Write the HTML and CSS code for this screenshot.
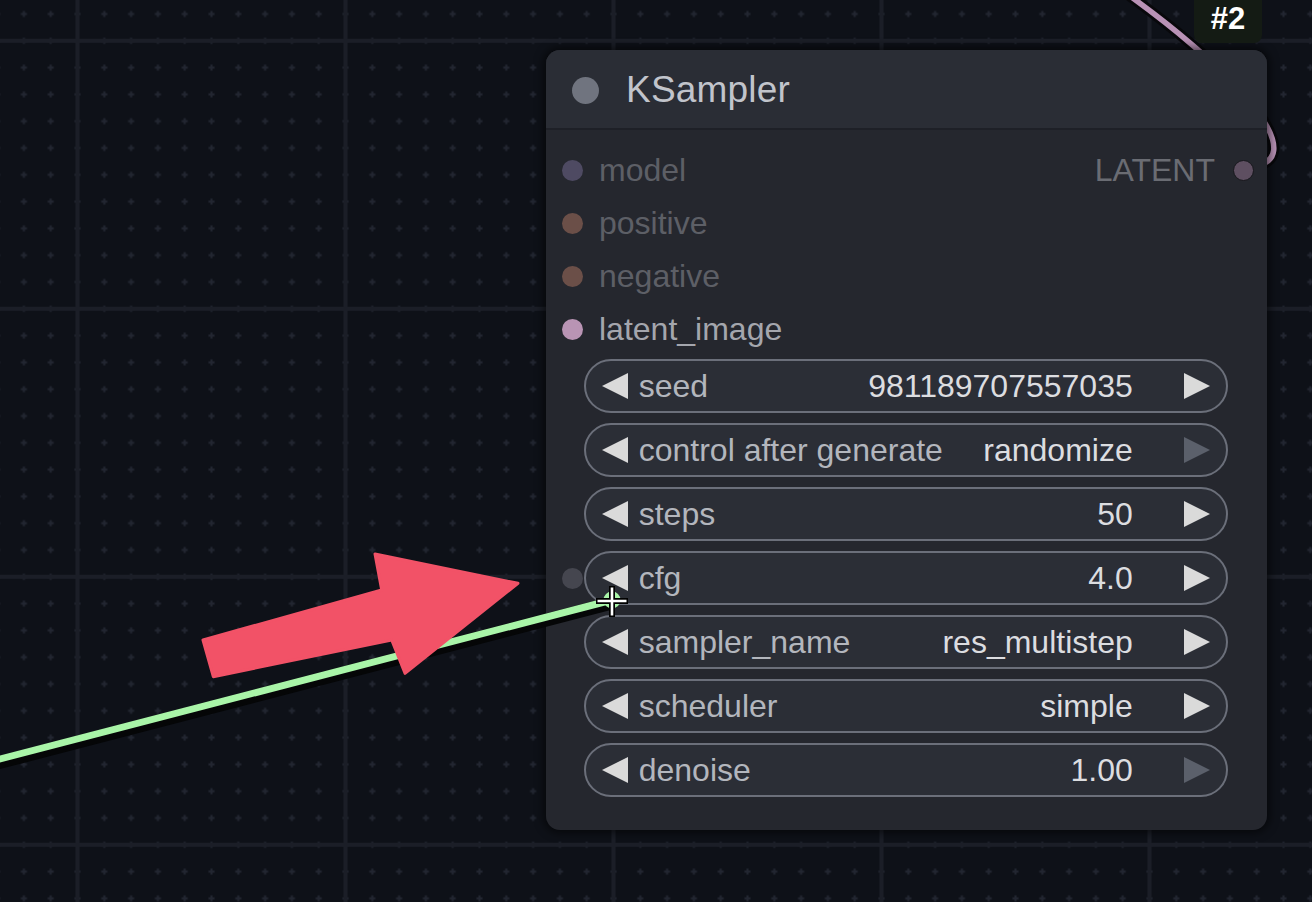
FILE: index.html
```html
<!doctype html>
<html>
<head>
<meta charset="utf-8">
<title>KSampler</title>
<link rel="stylesheet" href="styles.css">
</head>
<body>
<div class="canvas">
	<svg class="layer back" width="1312" height="902" viewBox="0 0 1312 902">
		<defs>
			<pattern id="minor" patternUnits="userSpaceOnUse" x="64.1" y="27.4" width="26.8" height="26.8">
				<rect x="10.4" y="12.4" width="6" height="2" fill="#222631"/>
				<rect x="12.4" y="10.4" width="2" height="6" fill="#222631"/>
			</pattern>
			<pattern id="major" patternUnits="userSpaceOnUse" x="75.5" y="38.8" width="268" height="268">
				<rect x="0" y="0" width="4" height="268" fill="#1b1e27"/>
				<rect x="0" y="0" width="268" height="4" fill="#1b1e27"/>
			</pattern>
		</defs>
		<rect width="1312" height="902" fill="#0e1118"/>
		<rect width="1312" height="902" fill="url(#minor)"/>
		<rect width="1312" height="902" fill="url(#major)"/>
		<path d="M1243,167 C1322,167 1240,70 1100,-25" fill="none" stroke="#08080b" stroke-width="11"/>
		<path d="M1243,167 C1322,167 1240,70 1100,-25" fill="none" stroke="#b992b6" stroke-width="5.5"/>
	</svg>

	<div class="node">
		<div class="node-title">
			<span class="title-dot"></span>
			<span class="title-text">KSampler</span>
		</div>
		<div class="node-body">
			<div class="slots">
				<div class="slot-row">
					<span class="slot-dot model"></span><span class="slot-name dim">model</span>
					<span class="slot-out">LATENT<span class="slot-dot latent-out"></span></span>
				</div>
				<div class="slot-row">
					<span class="slot-dot cond"></span><span class="slot-name dim">positive</span>
				</div>
				<div class="slot-row">
					<span class="slot-dot cond"></span><span class="slot-name dim">negative</span>
				</div>
				<div class="slot-row">
					<span class="slot-dot latent"></span><span class="slot-name">latent_image</span>
				</div>
			</div>
			<div class="widgets">
				<div class="widget-row"><span class="lead"></span>
					<div class="widget"><span class="arr left"></span><span class="w-label">seed</span><span class="w-value">981189707557035</span><span class="arr right"></span></div>
				</div>
				<div class="widget-row"><span class="lead"></span>
					<div class="widget"><span class="arr left"></span><span class="w-label">control after generate</span><span class="w-value">randomize</span><span class="arr right off"></span></div>
				</div>
				<div class="widget-row"><span class="lead"></span>
					<div class="widget"><span class="arr left"></span><span class="w-label">steps</span><span class="w-value">50</span><span class="arr right"></span></div>
				</div>
				<div class="widget-row"><span class="lead"><span class="slot-dot cfg"></span></span>
					<div class="widget"><span class="arr left"></span><span class="w-label">cfg</span><span class="w-value">4.0</span><span class="arr right"></span></div>
				</div>
				<div class="widget-row"><span class="lead"></span>
					<div class="widget"><span class="arr left"></span><span class="w-label">sampler_name</span><span class="w-value">res_multistep</span><span class="arr right"></span></div>
				</div>
				<div class="widget-row"><span class="lead"></span>
					<div class="widget"><span class="arr left"></span><span class="w-label">scheduler</span><span class="w-value">simple</span><span class="arr right"></span></div>
				</div>
				<div class="widget-row"><span class="lead"></span>
					<div class="widget"><span class="arr left"></span><span class="w-label">denoise</span><span class="w-value">1.00</span><span class="arr right off"></span></div>
				</div>
			</div>
		</div>
	</div>

	<div class="badge">#2</div>

	<svg class="layer front" width="1312" height="902" viewBox="0 0 1312 902">
		<line x1="-10" y1="765" x2="612" y2="603" stroke="#050607" stroke-width="13"/>
		<line x1="-10" y1="761.6" x2="612" y2="600" stroke="#a9f5a8" stroke-width="7"/>
		<circle cx="612" cy="600" r="8.5" fill="#a9f5a8"/>
		<polygon points="203,640 381.7,590 375,554 518,583.3 405,673.3 391.7,640 213.3,676.7" fill="#f25267" stroke="#f25267" stroke-width="3" stroke-linejoin="round"/>
		<path d="M612,586 V617 M596,601 H628" stroke="#000" stroke-width="6" fill="none"/>
		<path d="M612,587.5 V615.5 M597.5,601 H626.5" stroke="#fff" stroke-width="2.6" fill="none"/>
	</svg>
</div>
</body>
</html>
```

FILE: styles.css
```css
*{ margin:0; padding:0; box-sizing:border-box;}
body{ background:#0e1118; overflow:hidden; font-family:"Liberation Sans", Arial, sans-serif;}
.canvas{ width:1312px; height:902px; position:relative; overflow:hidden;}
.layer{ position:absolute; left:0; top:0; display:block;}
.front{ pointer-events:none;}

/* node sits on the free canvas */
.node{ position:absolute; left:546px; top:50px; width:721px; height:780px; background:#25272e; border-radius:14px; box-shadow:0 0 8px 3px rgba(0,0,0,.55); overflow:hidden;}
.node-title{ height:80px; background:#2a2d35; border-bottom:2px solid #1e2027; display:flex; align-items:center; padding:2px 0 0 26px;}
.title-dot{ width:27px; height:27px; border-radius:50%; background:#70747f;}
.title-text{ margin-left:27px; font-size:37px; color:#c1c4cb; letter-spacing:0.2px;}

.node-body{ padding:13.4px 39px 0 0;}
.slot-row{ height:53.3px; display:flex; align-items:center; padding-left:15.5px; font-size:32px;}
.slot-dot{ width:21px; height:21px; border-radius:50%; display:block; flex:none;}
.slot-dot.model{ background:#4e4a62;}
.slot-dot.cond{ background:#6b4f48;}
.slot-dot.latent{ background:#b994b4;}
.slot-dot.latent-out{ background:#5e4f61; border:1.5px solid #17171c; margin-left:17.5px; margin-right:-25.5px;}
.slot-dot.cfg{ background:#45464f;}
.slot-name{ margin-left:16.5px; color:#a4a6ad;}
.slot-name.dim{ color:#5d5f66;}
.slot-out{ margin-left:auto; display:flex; align-items:center; color:#6a6c73;}

.widgets{ margin-top:2.6px; display:flex; flex-direction:column; gap:10px;}
.widget-row{ display:flex; align-items:center;}
.lead{ width:38.3px; flex:none; padding-left:15.5px;}
.widget{ flex:1; height:54px; border:2px solid #6b6f7a; border-radius:27px; background:#2b2e36; display:flex; align-items:center; padding:0 15.7px 0 15.4px; font-size:32px;}
.arr{ width:0; height:0; border-top:13px solid transparent; border-bottom:13px solid transparent; flex:none;}
.arr.left{ border-right:26px solid #dadada;}
.arr.right{ border-left:26px solid #dadada;}
.arr.right.off{ border-left-color:#5b606b;}
.w-label{ margin-left:11px; color:#b3b6bd;}
.w-value{ margin-left:auto; margin-right:51.6px; color:#dcdde0;}

.badge{ position:absolute; left:1194px; top:-8px; width:68px; height:51px; border-radius:8px; background:#141b14; color:#fff; font-weight:bold; font-size:31px; display:flex; align-items:flex-end; justify-content:center; padding-bottom:6px;}
```
